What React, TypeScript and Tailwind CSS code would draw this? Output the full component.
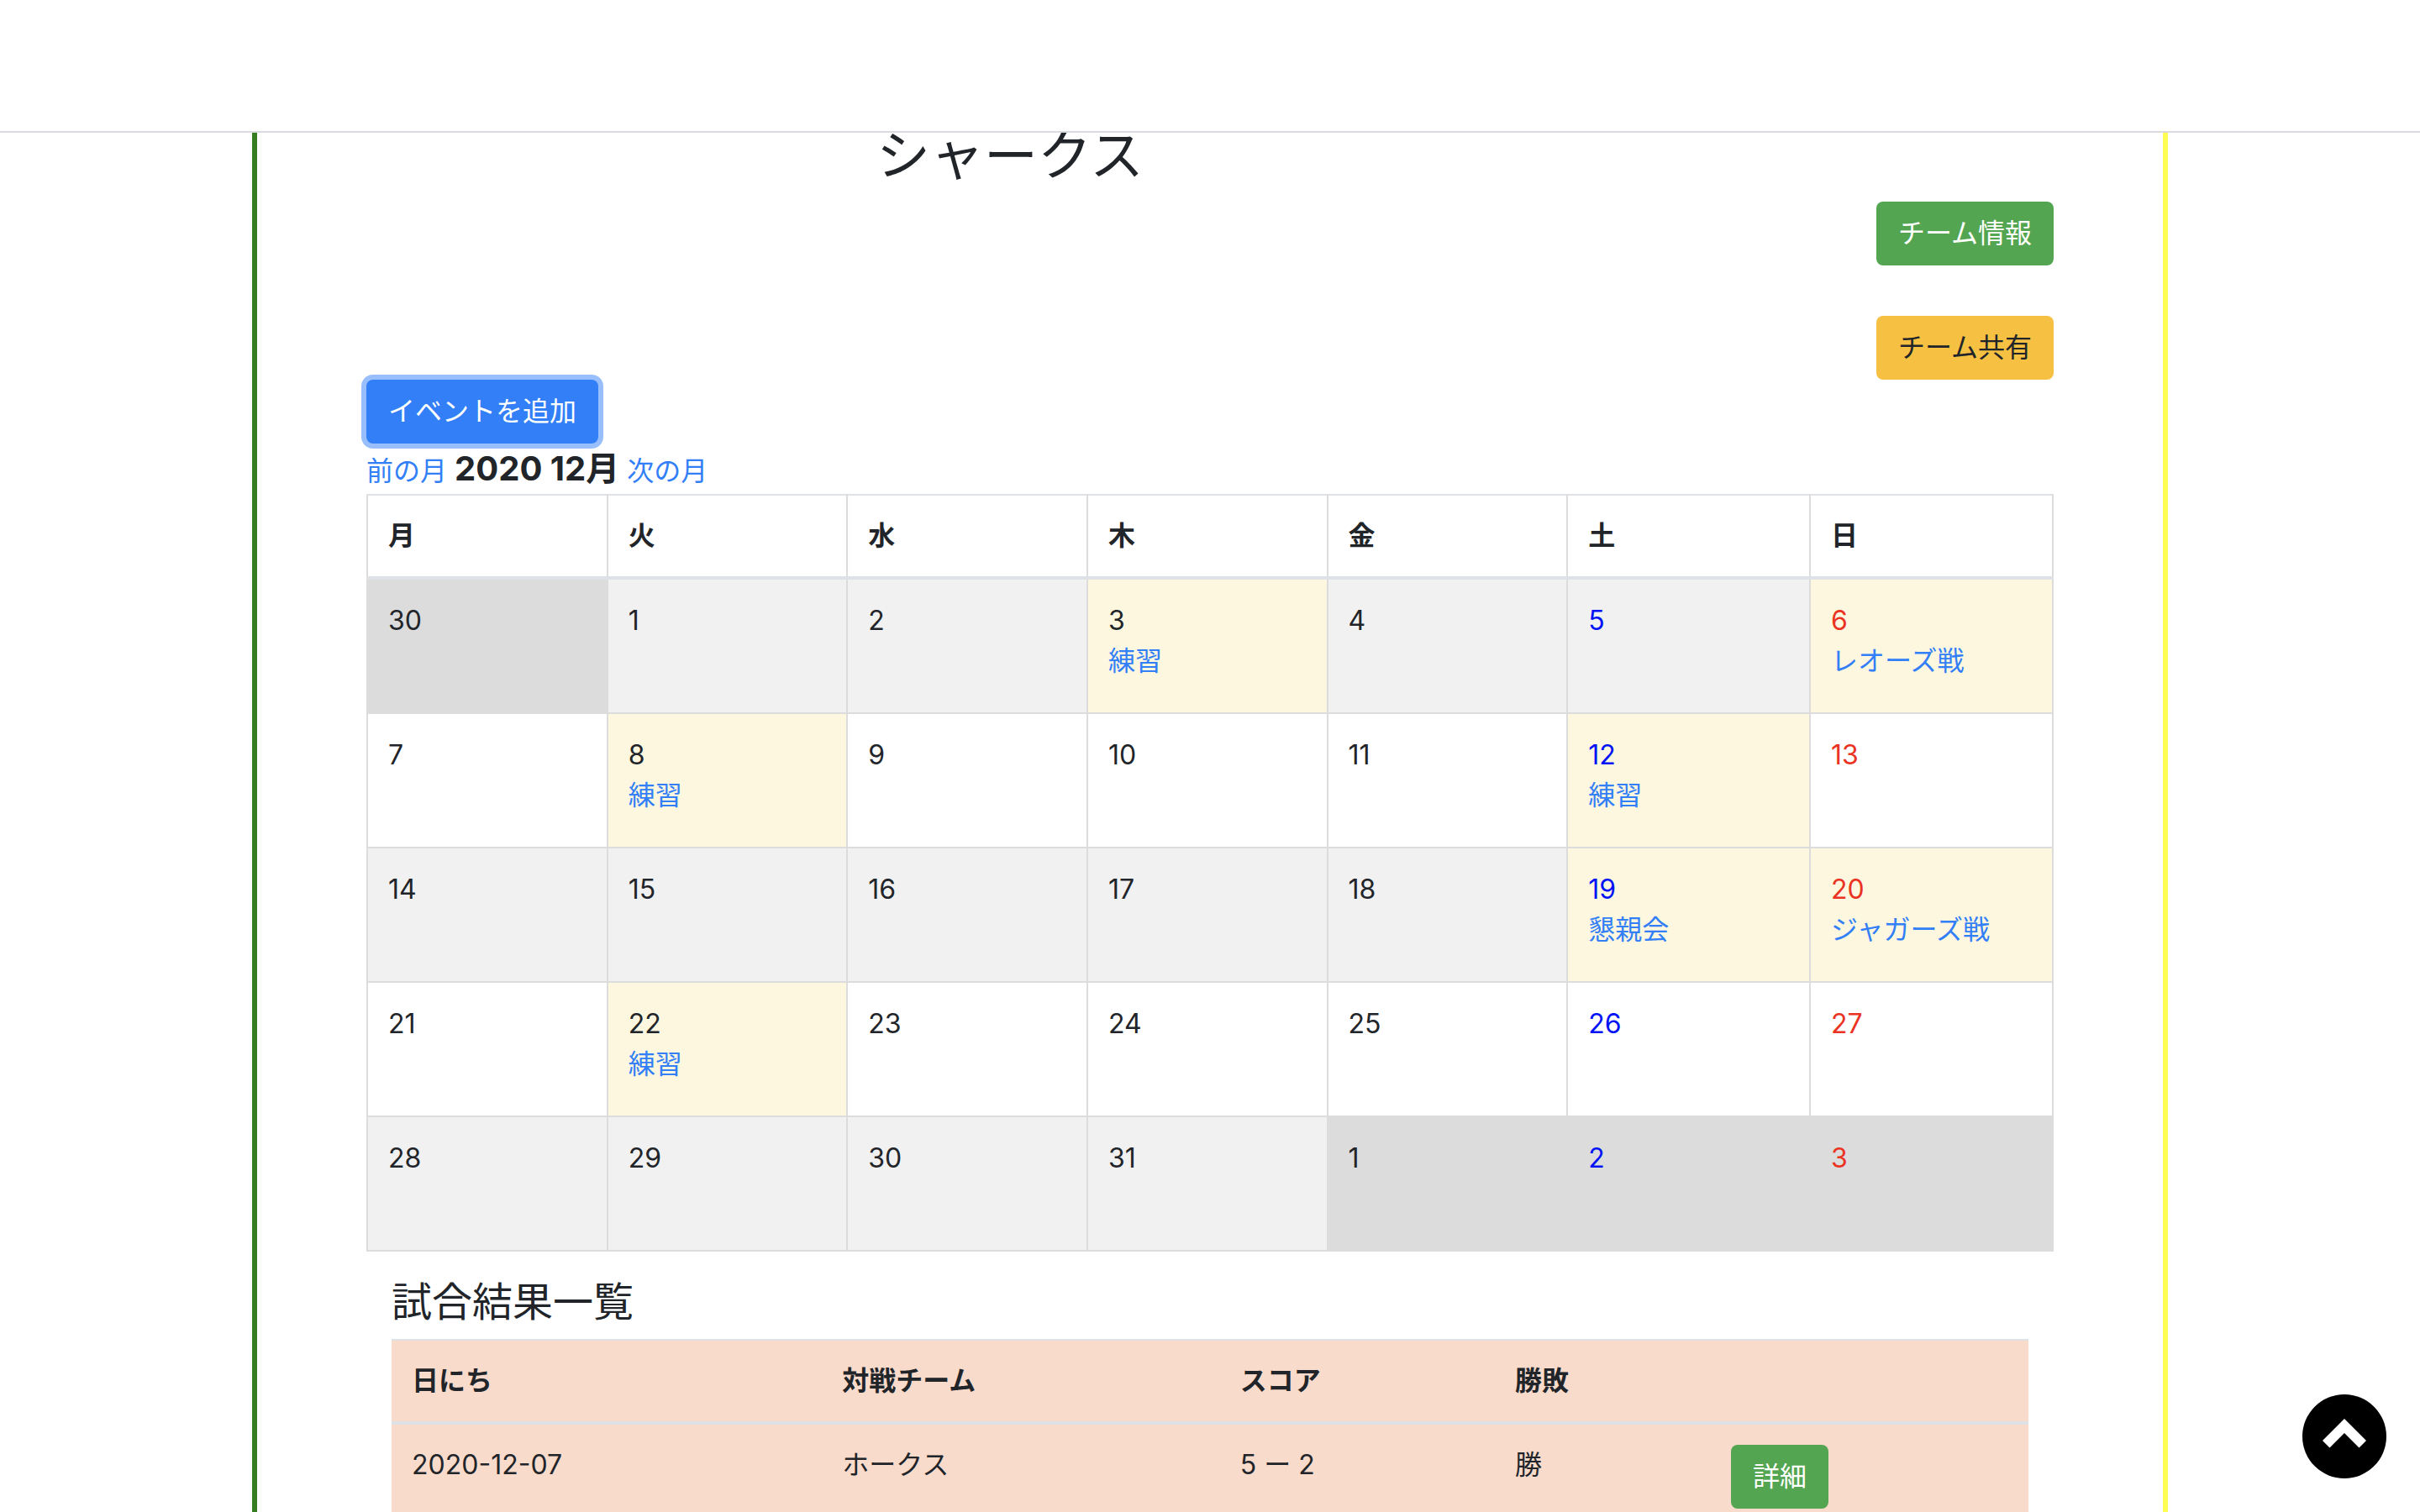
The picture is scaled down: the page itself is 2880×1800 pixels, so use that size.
type Day = { day: number; event?: string; outside?: boolean };

const weekdays = ["月", "火", "水", "木", "金", "土", "日"];

const weeks: Day[][] = [
  [
    { day: 30, outside: true },
    { day: 1 },
    { day: 2 },
    { day: 3, event: "練習" },
    { day: 4 },
    { day: 5 },
    { day: 6, event: "レオーズ戦" },
  ],
  [
    { day: 7 },
    { day: 8, event: "練習" },
    { day: 9 },
    { day: 10 },
    { day: 11 },
    { day: 12, event: "練習" },
    { day: 13 },
  ],
  [
    { day: 14 },
    { day: 15 },
    { day: 16 },
    { day: 17 },
    { day: 18 },
    { day: 19, event: "懇親会" },
    { day: 20, event: "ジャガーズ戦" },
  ],
  [
    { day: 21 },
    { day: 22, event: "練習" },
    { day: 23 },
    { day: 24 },
    { day: 25 },
    { day: 26 },
    { day: 27 },
  ],
  [
    { day: 28 },
    { day: 29 },
    { day: 30 },
    { day: 31 },
    { day: 1, outside: true },
    { day: 2, outside: true },
    { day: 3, outside: true },
  ],
];

const results = [{ date: "2020-12-07", team: "ホークス", score: "5 ー 2", outcome: "勝" }];

const button = "rounded-lg px-[26px] py-[14px] leading-[48px]";

function cellBackground(cell: Day, week: number) {
  if (cell.outside) return "bg-[#dcdcdc]";
  if (cell.event) return "bg-[#fef7df]";
  return week % 2 === 0 ? "bg-[#f1f1f1]" : "bg-white";
}

function dayColor(column: number) {
  if (column === 5) return "text-[#0013f5]";
  if (column === 6) return "text-[#ea3323]";
  return "";
}

function Calendar() {
  return (
    <table className="w-full table-fixed border-collapse">
      <colgroup>
        <col span={5} className="w-[14.24%]" />
        <col span={2} />
      </colgroup>
      <thead>
        <tr>
          {weekdays.map((name) => (
            <th
              key={name}
              scope="col"
              className="border-2 border-b-4 border-[#dcdcdc] border-t-[#dee2e6] border-b-[#dee2e6] p-6 text-left font-bold"
            >
              {name}
            </th>
          ))}
        </tr>
      </thead>
      <tbody>
        {weeks.map((week, w) => (
          <tr key={w} className="h-[160px] first:h-[161px]">
            {week.map((cell, column) => (
              <td
                key={column}
                className={`border-2 border-[#dcdcdc] px-6 pt-[25px] align-top ${cellBackground(cell, w)}`}
              >
                <div className={dayColor(column)}>{cell.day}</div>
                {cell.event && (
                  <a href="#event" className="block text-[#327ff7]">
                    {cell.event}
                  </a>
                )}
              </td>
            ))}
          </tr>
        ))}
      </tbody>
    </table>
  );
}

function Results() {
  return (
    <section className="px-[30px] pt-8">
      <h2 className="mb-4 text-5xl leading-[56px]">試合結果一覧</h2>
      <table className="w-full table-fixed border-collapse bg-[#f9dbcc]">
        <colgroup>
          <col className="w-[26.3%]" />
          <col className="w-[24.3%]" />
          <col className="w-[16.8%]" />
          <col className="w-[13.2%]" />
          <col />
        </colgroup>
        <thead>
          <tr className="border-t-2 border-b-4 border-[#dee2e6] text-left">
            <th scope="col" className="p-6">日にち</th>
            <th scope="col" className="p-6">対戦チーム</th>
            <th scope="col" className="p-6">スコア</th>
            <th scope="col" className="p-6">勝敗</th>
            <th scope="col" className="p-6" aria-label="操作" />
          </tr>
        </thead>
        <tbody>
          {results.map((r) => (
            <tr key={r.date} className="align-top">
              <td className="p-6">{r.date}</td>
              <td className="p-6">{r.team}</td>
              <td className="p-6">{r.score}</td>
              <td className="p-6">{r.outcome}</td>
              <td className="p-6">
                <button type="button" className={`${button} bg-[#53a551] text-white`}>
                  詳細
                </button>
              </td>
            </tr>
          ))}
        </tbody>
      </table>
    </section>
  );
}

export default function App() {
  return (
    <div className="flex h-screen flex-col bg-white font-[Inter,'Noto_Sans_CJK_JP',sans-serif] text-[32px] leading-[48px] text-[#212529]">
      <header className="h-[158px] shrink-0 border-b-2 border-[#dadbe0]" />
      <main className="min-h-0 flex-1 overflow-y-auto [scrollbar-width:none]">
        <div className="mx-auto max-w-[2280px] border-x-[6px] border-l-[#377e22] border-r-[#fffe54] px-[130px]">
          <h1 className="-mt-3 mb-4 w-[76.3%] text-center text-[64px] leading-[78px]">シャークス</h1>
          <div className="flex flex-col items-end gap-[60px]">
            <button type="button" className={`${button} bg-[#53a551] text-white`}>
              チーム情報
            </button>
            <button type="button" className={`${button} bg-[#f6c142]`}>
              チーム共有
            </button>
          </div>
          <button
            type="button"
            className={`${button} block bg-[#327ff7] text-white ring-[6px] ring-[#98befb]`}
          >
            イベントを追加
          </button>
          <nav className="flex h-[60px] items-baseline gap-[9px] leading-[60px]">
            <a href="#prev" className="text-[#327ff7]">前の月</a>
            <strong className="text-[40px] font-bold">2020 12月</strong>
            <a href="#next" className="text-[#327ff7]">次の月</a>
          </nav>
          <Calendar />
          <Results />
        </div>
      </main>
      <button
        type="button"
        aria-label="ページの先頭へ"
        className="fixed right-10 bottom-10 size-[100px] rounded-full bg-black"
      >
        <svg viewBox="0 0 100 100" className="size-full fill-white" aria-hidden="true">
          <path d="M50 29 L76 55 L67.5 63.5 L50 46 L32.5 63.5 L24 55 Z" />
        </svg>
      </button>
    </div>
  );
}
